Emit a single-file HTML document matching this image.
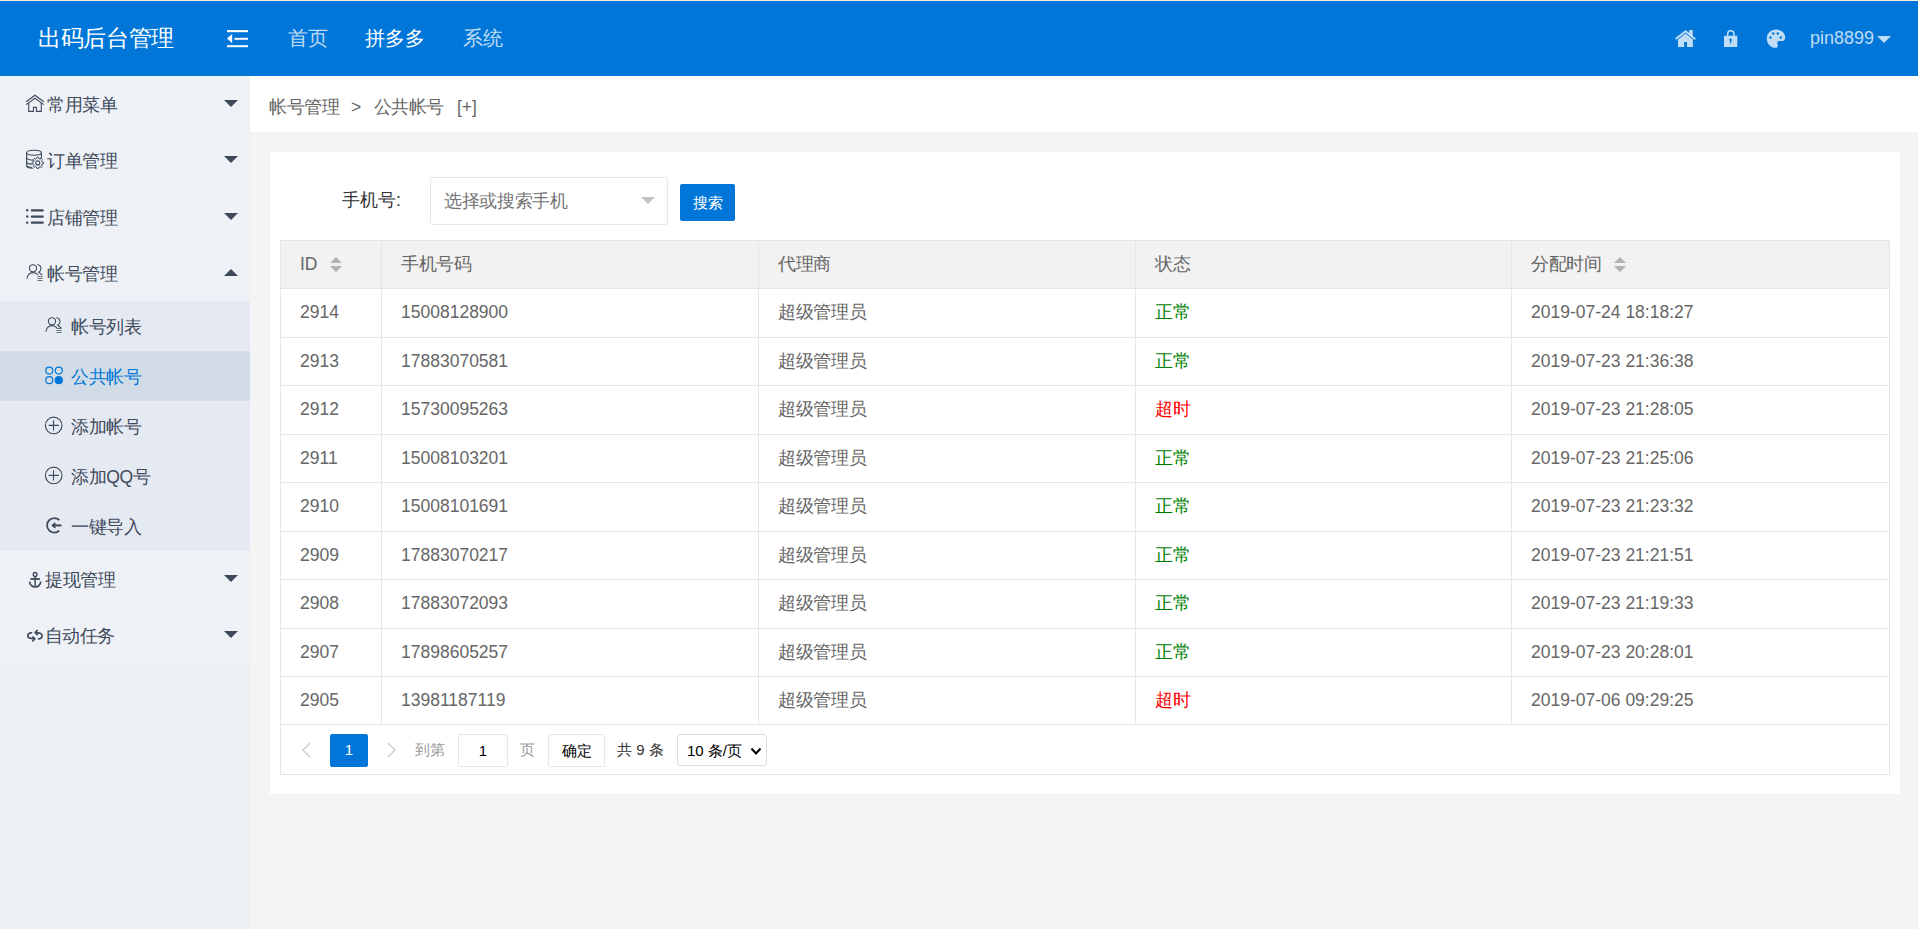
<!DOCTYPE html>
<html><head><meta charset="utf-8">
<style>
*{box-sizing:border-box;margin:0;padding:0}
html,body{width:1918px;height:929px;overflow:hidden;background:#f4f4f4;font-family:"Liberation Sans",sans-serif;color:#666}
.abs{position:absolute}
#top{position:absolute;left:0;top:0;width:1918px;height:1px;background:#fbefe2}
#hdr{position:absolute;left:0;top:1px;width:1918px;height:75px;background:#0077d8}
#hdr .t{position:absolute;white-space:nowrap;line-height:1}
#side{position:absolute;left:0;top:76px;width:250px;height:853px;background:#eceff4}
.mi{position:absolute;left:0;width:250px;background:#eef1f6;color:#3e4a5b;font-size:17.5px}
.sub{position:absolute;left:0;width:250px;background:#e5e9f2}
.sel{position:absolute;left:0;width:250px;background:#d2dce6}
.txt{position:absolute;white-space:nowrap;line-height:1}
.tri{position:absolute;width:0;height:0;border-left:7px solid transparent;border-right:7px solid transparent}
#bc{position:absolute;left:250px;top:76px;width:1668px;height:56px;background:#fff}
#card{position:absolute;left:270px;top:152px;width:1630px;height:642px;background:#fff}
table{border-collapse:collapse;position:absolute;left:280px;top:240px;width:1610px;table-layout:fixed}
td,th{border:1px solid #e6e6e6;font-weight:normal;text-align:left;padding:0 0 0 19px;font-size:17.5px;color:#666;height:48.5px;white-space:nowrap}
th{background:#f2f2f2;height:48px}
#tbl .c.g{color:#008000}#tbl .c.r{color:#ff0000}

#tbl{position:absolute;left:280px;top:240px;width:1610px;height:535px;border:1px solid #e6e6e6;box-sizing:border-box}
#tbl .hl{position:absolute;left:0;width:1608px;height:1px;background:#e6e6e6}
#tbl .vl{position:absolute;top:0;width:1px;height:484px;background:#e6e6e6}
#tbl .c{position:absolute;white-space:nowrap;font-size:17.5px;color:#666}
.sel-box{position:absolute;left:430px;top:177px;width:238px;height:48px;border:1px solid #e6e6e6;border-radius:3px;background:#fff}
.btn{position:absolute;left:680px;top:184px;width:55px;height:37px;background:#0077d8;border-radius:2px;color:#fff;font-size:15px;line-height:37px;text-align:center}
.pbox{position:absolute;height:33px;border:1px solid #e6e6e6;border-radius:2px;background:#fff;text-align:center;line-height:31px;color:#000;font-size:15px}
.cj{letter-spacing:-0.35px}
</style></head><body>
<div id="top"></div>
<div id="hdr">
  <div class="t" style="left:38px;top:27px;letter-spacing:-0.35px;font-size:22.5px;color:#fff">出码后台管理</div>
  <svg class="abs" style="left:227px;top:29px" width="22" height="18" viewBox="0 0 22 18"><g fill="#fff"><rect x="0" y="0.1" width="21.1" height="2.1"/><path d="M0 8.56 L5.2 3.9 L5.2 13.2 Z"/><rect x="7.5" y="7.8" width="13.6" height="2"/><rect x="0" y="15.2" width="21.1" height="2"/></g></svg>
  <div class="t" style="left:288px;top:27px;font-size:20px;color:rgba(255,255,255,.75)">首页</div>
  <div class="t" style="left:365px;top:27px;font-size:20px;color:#fff">拼多多</div>
  <div class="t" style="left:463px;top:27px;font-size:20px;color:rgba(255,255,255,.75)">系统</div>

  <svg class="abs" style="left:1675px;top:27px" width="22" height="20" viewBox="0 0 22 20"><g fill="rgba(255,255,255,.75)"><path d="M0 10.3 L10.6 2 L20.9 10.4 L19.7 11.9 L10.6 4.6 L1.4 11.8Z"/><path d="M14.2 2 H17.7 V8.6 L14.2 5.8Z"/><path d="M3 18.9 V11.4 L10.6 5.6 L17.9 11.4 V18.9 H12 V14 H9.1 V18.9Z"/></g></svg>
  <svg class="abs" style="left:1724px;top:27px" width="14" height="20" viewBox="0 0 14 20"><g fill="rgba(255,255,255,.75)"><path d="M2.9 8 V5.8 A3.9 3.9 0 0 1 10.7 5.8 V8 H9.2 V5.9 A2.4 2.4 0 0 0 4.4 5.9 V8Z"/><path fill-rule="evenodd" d="M0 7.7 H13.3 V18.9 H0Z M6.6 10.5 A1.3 1.3 0 0 0 5.9 12.9 L6.4 15.9 H6.8 L7.3 12.9 A1.3 1.3 0 0 0 6.6 10.5Z"/></g></svg>
  <svg class="abs" style="left:1766px;top:27.5px" width="20" height="20" viewBox="0 0 20 20"><path fill="rgba(255,255,255,.75)" fill-rule="evenodd" d="M10 0.6 C15.2 0.6 19.2 4.2 19.2 8.4 C19.2 11 17.4 12 15.6 12 H13.2 C11.6 12 10.8 13.4 11.4 14.8 C12.2 16.6 11.6 18.8 9.8 18.8 C4.8 18.8 0.8 14.8 0.8 9.7 C0.8 4.6 4.8 0.6 10 0.6Z M3.15 8.40 a1.25 1.25 0 1 0 2.5 0 a1.25 1.25 0 1 0 -2.5 0Z M5.95 4.60 a1.25 1.25 0 1 0 2.5 0 a1.25 1.25 0 1 0 -2.5 0Z M10.55 4.60 a1.25 1.25 0 1 0 2.5 0 a1.25 1.25 0 1 0 -2.5 0Z M13.55 8.40 a1.25 1.25 0 1 0 2.5 0 a1.25 1.25 0 1 0 -2.5 0Z"/></svg>
  <div class="t" style="left:1810px;top:28px;font-size:18px;color:rgba(255,255,255,.75)">pin8899</div>
  <div class="tri" style="left:1877px;top:35px;border-left-width:7px;border-right-width:7px;border-top:7px solid rgba(255,255,255,.75)"></div>
</div>
<div id="side">
  <div class="mi" style="top:0;height:56px"><span class="txt cj" style="left:47px;top:21px">常用菜单</span><div class="tri" style="left:224px;top:24px;border-top:7.5px solid #3e4a5b"></div></div>
  <div class="mi" style="top:56px;height:57px"><span class="txt cj" style="left:47px;top:21px">订单管理</span><div class="tri" style="left:224px;top:24px;border-top:7.5px solid #3e4a5b"></div></div>
  <div class="mi" style="top:113px;height:56px"><span class="txt cj" style="left:47px;top:21px">店铺管理</span><div class="tri" style="left:224px;top:24px;border-top:7.5px solid #3e4a5b"></div></div>
  <div class="mi" style="top:169px;height:56px"><span class="txt cj" style="left:47px;top:21px">帐号管理</span><div class="tri" style="left:224px;top:24px;border-bottom:7.5px solid #3e4a5b"></div></div>
  <div class="sub" style="top:225px;height:250px"></div>
  <div class="sel" style="top:275px;height:50px"></div>
  <div class="mi" style="top:475px;height:56px"><span class="txt cj" style="left:45px;top:21px">提现管理</span><div class="tri" style="left:224px;top:24px;border-top:7.5px solid #3e4a5b"></div></div>
  <div class="mi" style="top:531px;height:57px"><span class="txt cj" style="left:44.5px;top:21px">自动任务</span><div class="tri" style="left:224px;top:24px;border-top:7.5px solid #3e4a5b"></div></div>
  <span class="txt cj" style="left:71px;top:242.5px;font-size:17.5px;color:#3e4a5b">帐号列表</span>
  <span class="txt cj" style="left:71px;top:292.5px;font-size:17.5px;color:#0077d8">公共帐号</span>
  <span class="txt cj" style="left:71px;top:342.5px;font-size:17.5px;color:#3e4a5b">添加帐号</span>
  <span class="txt cj" style="left:71px;top:392.5px;font-size:17.5px;color:#3e4a5b">添加QQ号</span>
  <span class="txt cj" style="left:71px;top:442.5px;font-size:17.5px;color:#3e4a5b">一键导入</span>
</div>

<svg class="abs" style="left:0;top:0" width="250" height="929" viewBox="0 0 250 929">
<g fill="none" stroke="#3e4a5b" stroke-width="1.1">
  <!-- house -->
  <path d="M26.2 101.8 L35 95.3 L43.8 101.8"/>
  <path d="M26.2 104.6 L35 98.3 L43.8 104.6"/>
  <path d="M28.7 103 V111.4 H33.4 V107.4 H36.4 V111.4 H41.3 V103"/>
  <!-- database -->
  <ellipse cx="34" cy="152.8" rx="7.4" ry="2.5"/>
  <path d="M26.6 152.8 V165.6 C26.6 167.5 30 168.3 33 168.3"/>
  <path d="M41.4 152.8 V158"/>
  <path d="M26.6 157.6 C26.6 159.6 31 160.2 34 160.2 C37 160.2 41.4 159.6 41.4 157.6"/>
  <path d="M26.6 162 C27 163.3 29.5 164 32 164.3"/>
  <path d="M26.6 165.4 C27 166.8 29.5 167.2 32 167.6"/>
  <!-- user group -->
  <circle cx="33" cy="268.3" r="3.6"/>
  <path d="M27 278.8 C27 275.3 29.6 272.6 33 272.6 C35.2 272.6 37 273.6 38.2 275"/>
  <path d="M37.4 264.5 C39.6 265 41 266.6 41 268.6 C41 270.2 40 271.6 38.6 272.2 L42.2 275"/>
</g>
<g fill="#3e4a5b">
  <!-- gear -->
  <path d="M42.06 161.81 L43.45 162.14 L43.45 163.66 L42.06 163.99 L41.59 165.14 L42.33 166.36 L41.26 167.43 L40.04 166.69 L38.89 167.16 L38.56 168.55 L37.04 168.55 L36.71 167.16 L35.56 166.69 L34.34 167.43 L33.27 166.36 L34.01 165.14 L33.54 163.99 L32.15 163.66 L32.15 162.14 L33.54 161.81 L34.01 160.66 L33.27 159.44 L34.34 158.37 L35.56 159.11 L36.71 158.64 L37.04 157.25 L38.56 157.25 L38.89 158.64 L40.04 159.11 L41.26 158.37 L42.33 159.44 L41.59 160.66Z" fill="#eef1f6" stroke="#3e4a5b" stroke-width="1"/>
  <circle cx="37.8" cy="162.9" r="2" fill="none" stroke="#3e4a5b" stroke-width="1.1"/>
  <!-- list -->
  <circle cx="27.2" cy="210.3" r="1.2"/><circle cx="27.2" cy="216.5" r="1.2"/><circle cx="27.2" cy="222.6" r="1.2"/>
  <rect x="30.8" y="209.2" width="13" height="2.3" rx="1"/><rect x="30.8" y="215.4" width="13" height="2.3" rx="1"/><rect x="30.8" y="221.5" width="13" height="2.3" rx="1"/>
  <g opacity=".8"><rect x="37.4" y="276" width="5.3" height="0.9"/><rect x="37.4" y="278" width="5.3" height="0.9"/><rect x="37.4" y="280" width="5.3" height="0.9"/></g>
  <g opacity=".8"><rect x="56.4" y="328" width="5.3" height="0.9"/><rect x="56.4" y="330" width="5.3" height="0.9"/><rect x="56.4" y="332" width="5.3" height="0.9"/></g>
</g>
<g fill="none" stroke="#3e4a5b" stroke-width="1.1">
  <!-- sub user -->
  <circle cx="52" cy="321.3" r="3.6"/>
  <path d="M46 331.8 C46 328.3 48.6 325.6 52 325.6 C54.2 325.6 56 326.6 57.2 328"/>
  <path d="M56.4 317.5 C58.6 318 60 319.6 60 321.6 C60 323.2 59 324.6 57.6 325.2 L61.2 328"/>
  <!-- plus circles -->
  <circle cx="53.7" cy="425.4" r="8.3"/><path d="M48.6 425.4 H58.9 M53.5 420.2 V430.6"/>
  <circle cx="53.7" cy="475.4" r="8.3"/><path d="M48.6 475.4 H58.9 M53.5 470.2 V480.6"/>
</g>
<g fill="none" stroke="#3e4a5b" stroke-width="1.8">
  <!-- import -->
  <path d="M59.3 520 A7.3 7.3 0 1 0 59.3 530.7"/>
  <path d="M52.4 525.4 H61.4" stroke-width="2"/>
  <path d="M55.4 523 L52.6 525.4 L55.4 527.8" stroke-width="1.7"/>
</g>
<g fill="none" stroke="#3e4a5b" stroke-width="1.5">
  <!-- anchor -->
  <circle cx="35.15" cy="574.4" r="1.9" stroke-width="1.3"/>
  <path d="M35.15 576.3 V586.4"/>
  <path d="M30.4 579 H39.9" stroke-width="1.8"/>
  <path d="M29.6 581.4 A5.55 5.55 0 0 0 40.7 581.4" stroke-width="1.6"/>
  <!-- sync -->
  <path d="M32.2 632.6 C29.6 632.9 27.8 634.2 27.8 635.8 C27.8 637.7 30.6 638.8 34.6 638.8" stroke-width="1.7"/>
  <path d="M32.4 636.6 L34.8 638.8 L32.4 641.4" stroke-width="1.7"/>
  <path d="M37.8 639 C40.4 638.8 42.1 637.5 42.1 635.7 C42.1 633.8 39.4 632.6 35.4 632.6" stroke-width="1.7"/>
  <path d="M37.6 630 L35.2 632.6 L37.6 635.2" stroke-width="1.7"/>
</g>
<g fill="none" stroke="#0077d8" stroke-width="1.2">
  <circle cx="49.3" cy="370.6" r="3.5"/><circle cx="58.8" cy="370.6" r="3.5"/><circle cx="49.3" cy="380.2" r="3.5"/>
</g>
<circle cx="58.8" cy="380.2" r="4.1" fill="#0077d8"/>
</svg>
<div id="bc" style="font-size:17.5px;color:#666"><span class="txt cj" style="left:19px;top:22.5px">帐号管理</span><span class="txt" style="left:101px;top:22.5px">&gt;</span><span class="txt cj" style="left:123.5px;top:22.5px">公共帐号</span><span class="txt" style="left:207px;top:22.5px">[+]</span></div>
<div id="card"></div>
<span class="txt" style="left:342px;top:192px;font-size:17.5px;color:#333">手机号:</span>
<div class="sel-box"><span class="txt cj" style="left:13px;top:15px;font-size:17.5px;color:#757575">选择或搜索手机</span><div class="tri" style="left:210px;top:19px;border-left-width:7px;border-right-width:7px;border-top:7px solid #c2c2c2"></div></div>
<div class="btn">搜索</div>
<div id="tbl">
<div class="abs" style="left:0px;top:0px;width:1608px;height:47px;background:#f2f2f2"></div>
<div class="hl" style="top:47px"></div>
<div class="hl" style="top:96px"></div>
<div class="hl" style="top:144px"></div>
<div class="hl" style="top:193px"></div>
<div class="hl" style="top:241px"></div>
<div class="hl" style="top:290px"></div>
<div class="hl" style="top:338px"></div>
<div class="hl" style="top:387px"></div>
<div class="hl" style="top:435px"></div>
<div class="hl" style="top:483px"></div>
<div class="vl" style="left:100px"></div>
<div class="vl" style="left:477px"></div>
<div class="vl" style="left:854px"></div>
<div class="vl" style="left:1230px"></div>
<span class="c" style="left:19px;top:-1px;height:48px;line-height:48px">ID</span>
<span class="c cj" style="left:120px;top:-1px;height:48px;line-height:48px">手机号码</span>
<span class="c cj" style="left:497px;top:-1px;height:48px;line-height:48px">代理商</span>
<span class="c cj" style="left:874px;top:-1px;height:48px;line-height:48px">状态</span>
<span class="c cj" style="left:1250px;top:-1px;height:48px;line-height:48px">分配时间</span>
<svg class="abs sorti" style="left:49px;top:16px" width="12" height="15" viewBox="0 0 12 15"><path d="M6 0 L12 6 L0 6Z M0 9 L12 9 L6 15Z" fill="#b2b2b2"/></svg>
<svg class="abs sorti" style="left:1333px;top:16px" width="12" height="15" viewBox="0 0 12 15"><path d="M6 0 L12 6 L0 6Z M0 9 L12 9 L6 15Z" fill="#b2b2b2"/></svg>
<span class="c" style="left:19px;top:47px;height:49px;line-height:49px">2914</span>
<span class="c" style="left:120px;top:47px;height:49px;line-height:49px">15008128900</span>
<span class="c cj" style="left:497px;top:47px;height:49px;line-height:49px">超级管理员</span>
<span class="c g cj" style="left:874px;top:47px;height:49px;line-height:49px">正常</span>
<span class="c" style="left:1250px;top:47px;height:49px;line-height:49px">2019-07-24 18:18:27</span>
<span class="c" style="left:19px;top:96px;height:48px;line-height:48px">2913</span>
<span class="c" style="left:120px;top:96px;height:48px;line-height:48px">17883070581</span>
<span class="c cj" style="left:497px;top:96px;height:48px;line-height:48px">超级管理员</span>
<span class="c g cj" style="left:874px;top:96px;height:48px;line-height:48px">正常</span>
<span class="c" style="left:1250px;top:96px;height:48px;line-height:48px">2019-07-23 21:36:38</span>
<span class="c" style="left:19px;top:144px;height:49px;line-height:49px">2912</span>
<span class="c" style="left:120px;top:144px;height:49px;line-height:49px">15730095263</span>
<span class="c cj" style="left:497px;top:144px;height:49px;line-height:49px">超级管理员</span>
<span class="c r cj" style="left:874px;top:144px;height:49px;line-height:49px">超时</span>
<span class="c" style="left:1250px;top:144px;height:49px;line-height:49px">2019-07-23 21:28:05</span>
<span class="c" style="left:19px;top:193px;height:48px;line-height:48px">2911</span>
<span class="c" style="left:120px;top:193px;height:48px;line-height:48px">15008103201</span>
<span class="c cj" style="left:497px;top:193px;height:48px;line-height:48px">超级管理员</span>
<span class="c g cj" style="left:874px;top:193px;height:48px;line-height:48px">正常</span>
<span class="c" style="left:1250px;top:193px;height:48px;line-height:48px">2019-07-23 21:25:06</span>
<span class="c" style="left:19px;top:241px;height:49px;line-height:49px">2910</span>
<span class="c" style="left:120px;top:241px;height:49px;line-height:49px">15008101691</span>
<span class="c cj" style="left:497px;top:241px;height:49px;line-height:49px">超级管理员</span>
<span class="c g cj" style="left:874px;top:241px;height:49px;line-height:49px">正常</span>
<span class="c" style="left:1250px;top:241px;height:49px;line-height:49px">2019-07-23 21:23:32</span>
<span class="c" style="left:19px;top:290px;height:48px;line-height:48px">2909</span>
<span class="c" style="left:120px;top:290px;height:48px;line-height:48px">17883070217</span>
<span class="c cj" style="left:497px;top:290px;height:48px;line-height:48px">超级管理员</span>
<span class="c g cj" style="left:874px;top:290px;height:48px;line-height:48px">正常</span>
<span class="c" style="left:1250px;top:290px;height:48px;line-height:48px">2019-07-23 21:21:51</span>
<span class="c" style="left:19px;top:338px;height:49px;line-height:49px">2908</span>
<span class="c" style="left:120px;top:338px;height:49px;line-height:49px">17883072093</span>
<span class="c cj" style="left:497px;top:338px;height:49px;line-height:49px">超级管理员</span>
<span class="c g cj" style="left:874px;top:338px;height:49px;line-height:49px">正常</span>
<span class="c" style="left:1250px;top:338px;height:49px;line-height:49px">2019-07-23 21:19:33</span>
<span class="c" style="left:19px;top:387px;height:48px;line-height:48px">2907</span>
<span class="c" style="left:120px;top:387px;height:48px;line-height:48px">17898605257</span>
<span class="c cj" style="left:497px;top:387px;height:48px;line-height:48px">超级管理员</span>
<span class="c g cj" style="left:874px;top:387px;height:48px;line-height:48px">正常</span>
<span class="c" style="left:1250px;top:387px;height:48px;line-height:48px">2019-07-23 20:28:01</span>
<span class="c" style="left:19px;top:435px;height:48px;line-height:48px">2905</span>
<span class="c" style="left:120px;top:435px;height:48px;line-height:48px">13981187119</span>
<span class="c cj" style="left:497px;top:435px;height:48px;line-height:48px">超级管理员</span>
<span class="c r cj" style="left:874px;top:435px;height:48px;line-height:48px">超时</span>
<span class="c" style="left:1250px;top:435px;height:48px;line-height:48px">2019-07-06 09:29:25</span>
</div>
<svg class="abs" style="left:301px;top:742px" width="11" height="16" viewBox="0 0 11 16"><path d="M9 1 L2 8 L9 15" stroke="#cbcbcb" stroke-width="1.4" fill="none"/></svg>
<div class="pbox" style="left:330px;top:734px;width:38px;background:#0077d8;border-color:#0077d8;color:#fff;line-height:29px">1</div>
<svg class="abs" style="left:386px;top:742px" width="11" height="16" viewBox="0 0 11 16"><path d="M2 1 L9 8 L2 15" stroke="#cbcbcb" stroke-width="1.4" fill="none"/></svg>
<span class="txt cj" style="left:415px;top:742px;font-size:15px;color:#999">到第</span>
<div class="pbox" style="left:458px;top:734px;width:50px">1</div>
<span class="txt cj" style="left:520px;top:742px;font-size:15px;color:#999">页</span>
<div class="pbox" style="left:548px;top:734px;width:57px">确定</div>
<span class="txt" style="left:617px;top:742px;font-size:15px;color:#333">共 9 条</span>
<div class="pbox" style="left:677px;top:734px;width:90px;height:32px;border-color:#ddd;text-align:left;padding-left:9px;border-radius:3px">10 条/页</div>
<svg class="abs" style="left:750px;top:746.5px" width="12" height="9" viewBox="0 0 12 9"><path d="M1.5 1.5 L6 6.5 L10.5 1.5" stroke="#000" stroke-width="2" fill="none"/></svg>

</body></html>
